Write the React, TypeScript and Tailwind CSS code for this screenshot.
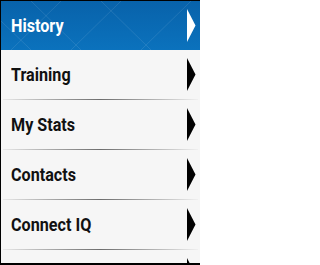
import React from "react";

const items = ["Training", "My Stats", "Contacts", "Connect IQ", ""];

function Arrow({ color }: { color: string }) {
  return (
    <svg width="9" height="33" viewBox="0 0 9 33" className="shrink-0">
      <polygon points="0,0 8.5,16.5 0,33" fill={color} />
    </svg>
  );
}

export default function App() {
  return (
    <div
      className="w-[200px] h-[265px] overflow-hidden bg-[#f6f6f6] border-t border-l border-b-2 border-black flex flex-col"
      style={{ fontFamily: 'Roboto, "Liberation Sans", sans-serif' }}
    >
      <div className="relative h-[49px] shrink-0 flex items-center justify-between pl-[10px] pr-[4px] bg-gradient-to-b from-[#0862aa] to-[#0b72bd] overflow-hidden">
        <svg className="absolute inset-0" width="200" height="49" viewBox="0 0 200 49">
          <g stroke="#ffffff" strokeOpacity="0.1" strokeWidth="1" fill="none">
            <line x1="10" y1="49" x2="60" y2="0" />
            <line x1="30" y1="0" x2="80" y2="49" />
            <line x1="70" y1="49" x2="120" y2="0" />
            <line x1="100" y1="0" x2="150" y2="49" />
            <line x1="140" y1="49" x2="190" y2="0" />
            <line x1="0" y1="20" x2="30" y2="49" />
          </g>
        </svg>
        <span className="relative text-white font-bold text-[19px] leading-none origin-left scale-x-[0.85] whitespace-nowrap">History</span>
        <div className="relative">
          <Arrow color="#ffffff" />
        </div>
      </div>
      {items.map((label, i) => (
        <div key={i} className="shrink-0 h-[50px] flex flex-col">
          <div className="h-[49px] shrink-0 flex items-center justify-between pl-[10px] pr-[4px]">
            <span className="text-[#111111] font-bold text-[19px] leading-none origin-left scale-x-[0.85] whitespace-nowrap">{label}</span>
            <Arrow color="#000000" />
          </div>
          <div className="h-px shrink-0 mx-[2px] bg-gradient-to-r from-[#e8e8e8] via-[#6e6e6e] to-[#f0f0f0]" />
        </div>
      ))}
    </div>
  );
}
